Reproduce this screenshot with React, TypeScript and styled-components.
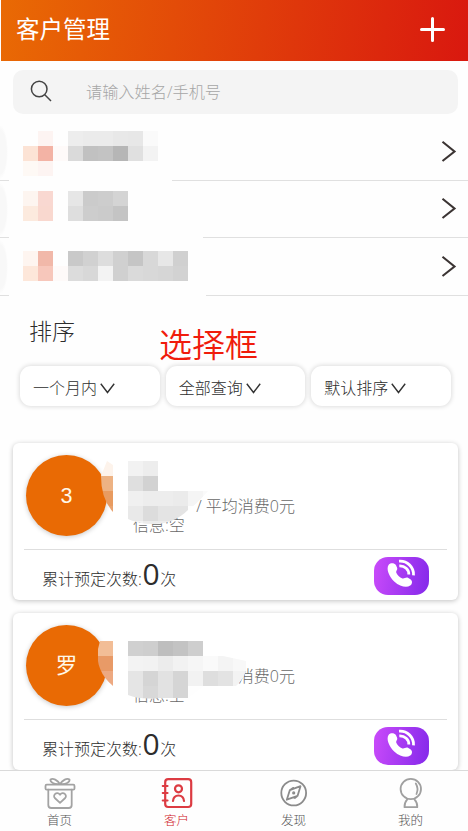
import React from 'react';
import styled, { createGlobalStyle } from 'styled-components';

const GlobalStyle = createGlobalStyle`
  * { box-sizing: border-box; }
  body { margin: 0; background: #fff; }
  h1, h2, p { margin: 0; font-weight: inherit; }
  button { font: inherit; color: inherit; border: 0; padding: 0; background: none; }
`;

const Screen = styled.div`
  width: 468px;
  height: 831px;
  display: flex;
  flex-direction: column;
  overflow: hidden;
  background: #fefefe;
  color: #2d2d2d;
  font-family: 'Open Sans', 'Noto Sans CJK SC', sans-serif;
  font-weight: 300;
  font-size: 16px;
`;

const Header = styled.header`
  flex: none;
  height: 61px;
  margin-left: 1px;
  padding: 0 22px 3px 15px;
  display: flex;
  align-items: center;
  justify-content: space-between;
  color: #fff;
  background: linear-gradient(98deg, #e96a04 0%, #d9180f 100%);
`;

const Title = styled.h1`
  font-size: 23.5px;
  line-height: 34px;
  font-weight: 400;
`;

const Content = styled.main`
  flex: 1;
  min-height: 0;
  overflow: hidden;
  display: flex;
  flex-direction: column;
`;

const SearchBar = styled.div`
  flex: none;
  height: 44px;
  margin: 9px 10px 9px 13px;
  padding: 0 0 2px 17px;
  display: flex;
  align-items: center;
  gap: 34px;
  border-radius: 10px;
  background: #f4f4f4;
  color: #a6a6a6;
  font-size: 16.2px;
`;

const Row = styled.div<{ $height: number; $top: number; $gapEnd: number }>`
  flex: none;
  height: ${(p) => p.$height}px;
  padding: ${(p) => p.$top}px 10px 0 23px;
  display: flex;
  justify-content: space-between;
  background:
    linear-gradient(90deg, #e0e0e0 9px, transparent 9px ${(p) => p.$gapEnd}px, #e0e0e0 ${(p) => p.$gapEnd}px) left bottom / 100% 1px no-repeat,
    radial-gradient(ellipse 8px 27px at 0 50%, #f8f8f8 80%, transparent 100%) left / 10px 100% no-repeat;
`;

const RowArrow = styled.span<{ $offset: number }>`
  margin-top: ${(p) => p.$offset}px;
  height: 22px;
  display: flex;
`;

const Pixels = styled.div<{ $cols: number }>`
  display: grid;
  grid-template-columns: repeat(${(p) => p.$cols}, 15px);
  grid-auto-rows: 15px;
  align-content: start;
`;

const Pixel = styled.i<{ $tone: string }>`
  background: ${(p) => p.$tone};
`;

const SortHead = styled.div`
  flex: none;
  height: 70px;
  padding: 17px 0 0 29px;
  display: flex;
  align-items: flex-start;
  gap: 84px;
`;

const SortTitle = styled.h2`
  font-size: 23px;
  line-height: 36px;
`;

const Note = styled.p`
  margin-top: 9px;
  font-size: 33px;
  line-height: 46px;
  font-weight: 350;
  color: #f01c0c;
`;

const Filters = styled.div`
  flex: none;
  display: flex;
  gap: 6px;
  padding: 0 17px 0 20px;
`;

const FilterButton = styled.button`
  flex: 1;
  height: 40px;
  padding: 4px 0 0 13px;
  display: flex;
  align-items: center;
  gap: 3px;
  border-radius: 11px;
  background: #fff;
  box-shadow: 0 0 4px 1px rgba(0, 0, 0, 0.13);
  line-height: 24px;
`;

const Cards = styled.section`
  flex: none;
  display: flex;
  flex-direction: column;
  gap: 13px;
  padding: 37px 10px 0 13px;
`;

const Card = styled.article`
  position: relative;
  height: 157px;
  padding: 0 11px;
  border-radius: 6px;
  background: #fff;
  box-shadow: 0 1px 5px rgba(0, 0, 0, 0.24);
`;

const CardTop = styled.div`
  height: 107px;
  padding: 12px 0 0 2px;
  display: flex;
  border-bottom: 1px solid #dedede;
`;

const Avatar = styled.div`
  width: 81px;
  height: 81px;
  padding-top: 1px;
  border-radius: 50%;
  display: flex;
  align-items: center;
  justify-content: center;
  background: #e96a04;
  box-shadow: 0 1px 5px rgba(0, 0, 0, 0.22);
  color: #fff8e8;
  font-family: 'Liberation Sans', 'Noto Sans CJK SC', sans-serif;
  font-size: 21.5px;
  font-weight: 400;
  line-height: 30px;
`;

const Details = styled.div`
  padding: 42px 0 0 26px;
  color: #686868;
  line-height: 19px;
`;

const Spend = styled.p`
  padding-left: 59px;
  white-space: pre;
`;

const CardBottom = styled.div`
  height: 50px;
  padding: 0 18px;
  display: flex;
  align-items: center;
  justify-content: space-between;
`;

const Count = styled.p`
  display: flex;
  align-items: baseline;
  line-height: 40px;
  margin-top: 2px;
`;

const CountNumber = styled.span`
  width: 18.5px;
  text-align: center;
  font-size: 30px;
  font-weight: 400;
`;

const CallButton = styled.button`
  width: 55px;
  height: 38px;
  margin-top: 1px;
  display: flex;
  justify-content: center;
  padding: 2px 2px 0 0;
  border-radius: 14px;
  background: linear-gradient(100deg, #ca4bfa, #8429ea);
`;

const CardMask = styled.div<{ $x: number; $y: number; $clip: string }>`
  position: absolute;
  left: ${(p) => p.$x}px;
  top: ${(p) => p.$y}px;
  clip-path: ${(p) => p.$clip};
`;

const TabBar = styled.nav`
  flex: none;
  height: 61px;
  display: grid;
  grid-template-columns: repeat(4, 117px);
  padding-left: 1px;
  border-top: 1px solid #dadada;
  background: #fefefe;
`;

const Tab = styled.button<{ $active?: boolean }>`
  display: flex;
  flex-direction: column;
  align-items: center;
  padding-top: 6px;
  font-size: 12.5px;
  line-height: 18px;
  color: ${(p) => (p.$active ? '#d0141c' : '#555')};
`;

const TabGlyph = styled.svg`
  width: 32px;
  height: 32px;
  margin-bottom: 3px;
  fill: none;
  stroke-width: 1.8;
  stroke-linejoin: round;
  stroke-linecap: round;
`;

function Mosaic({ rows }: { rows: string[] }) {
  const cells = rows.map((r) => r.split(' '));
  return (
    <Pixels $cols={cells[0].length}>
      {cells.flatMap((row, y) =>
        row.map((c, x) => <Pixel key={`${y}-${x}`} $tone={c === '-' ? 'transparent' : `#${c}`} />),
      )}
    </Pixels>
  );
}

const people = [
  {
    height: 58, top: 8, arrow: 9, gapEnd: 172,
    rows: [
      'fefefe fdf4f2 fefefe ededed ebebeb ebebeb e8e8e8 e7e7e7 fafafa',
      'fce3d5 f3b3a5 fefaf9 dadada c1c1c1 c3c3c3 b6b6b6 e0e0e0 f3f3f3',
      'fef9f5 fdf4f2 - - - - - - -',
    ],
  },
  {
    height: 57, top: 10, arrow: 6, gapEnd: 203,
    rows: [
      'fdf5f0 f9d8d1 - e6e6e6 cbcbcb cdcdcd d4d4d4',
      'fceade f9d8cf - dedede cdcdcd cbcbcb c4c4c4',
    ],
  },
  {
    height: 58, top: 13, arrow: 4, gapEnd: 206,
    rows: [
      'fef5f0 f1b8a9 - c9c9c9 d1d1d1 dddddd d0d0d0 c5c5c5 d8d8d8 e7e7e7 d0d0d0',
      'fde7da f7c7bb fefaf9 dcdcdc d8d8d8 f3f3f3 d0d0d0 dadada d8d8d8 d6d6d6 d2d2d2',
    ],
  },
];

const customers = [
  {
    initial: '3',
    avatar: { x: 85, y: 18, clip: "path('M9 0L15 4V51Q3 38 3 15Z')", rows: ['fdf3eb', 'edb283', 'e89b60', 'e9a36f'] },
    text: {
      x: 115, y: 18, clip: "path('M0 0H30V30H80Q68 44 60 49Q46 63 25 63Q10 63 0 58Z')",
      rows: ['f2f2f2 ededed - - - -', 'dfdfdf d2d2d2 - - - -', 'f0f0f0 ededed ededed ebebeb f5f5f5 fafafa', 'e9e9e9 dcdcdc e4e4e4 e4e4e4 fefefe fefefe', 'f3f3f3 ececec ececec f2f2f2 fefefe -'],
    },
  },
  {
    initial: '罗',
    avatar: { x: 85, y: 28, clip: "path('M2 0H15V45Q-3 30 0 8Z')", rows: ['f2bd96', 'e89a67', 'eda981'] },
    text: {
      x: 115, y: 28, clip: "path('M0 0H75V15H95L118 20V30Q114 40 108 45H76L60 57H32Q12 59 0 54Z')",
      rows: ['d0d0d0 cecece bebebe c3c3c3 cecece fefefe fefefe fefefe', 'f3f3f3 f2f2f2 ececec f2f2f2 f6f6f6 fafafa f4f4f4 f8f8f8', 'e5e5e5 d5d5d5 e2e2e2 d5d5d5 f2f2f2 dedede e3e3e3 f3f3f3', 'e5e5e5 d8d8d8 e2e2e2 d5d5d5 fefefe fefefe fefefe -'],
    },
  },
];

const PhoneIcon = () => (
  <svg width="30" height="30" viewBox="0 0 30 30" fill="none">
    <path d="M2.4 6.2C4 3.6 8.3 3.8 10 6.2L11.2 9C11.8 10.8 9.8 12 10.2 13.4C11 15.8 13.6 18.6 16.5 19.4C18.2 19.8 19.4 18.3 21.5 18.6L24.4 20.2C26.7 22 26.5 24.8 24.2 26.6C20.6 29 14.2 27.8 8.2 22.4C2.8 17.2 .2 10 2.4 6.2Z" fill="#fff" />
    <path d="M13 2.2C21 1.5 28 8 27.5 16.3M13.3 6.8C18.8 6.6 23 10.5 22.8 15.5" stroke="#fff" strokeWidth="2.8" />
  </svg>
);

export default function App() {
  return (
    <>
      <GlobalStyle />
      <Screen>
        <Header>
          <Title>客户管理</Title>
          <svg width="26" height="26" viewBox="0 0 26 26">
            <path d="M12.5 2.5V24.5M1.5 13.5H23.5" stroke="#fff" strokeWidth="3" strokeLinecap="round" />
          </svg>
        </Header>
        <Content>
          <SearchBar>
            <svg width="22" height="22" viewBox="0 0 22 22" fill="none" stroke="#444" strokeWidth="1.5">
              <circle cx="9.2" cy="9" r="7.8" />
              <path d="M14.8 14.7L21 21" />
            </svg>
            <span>请输入姓名/手机号</span>
          </SearchBar>
          {people.map((p, i) => (
            <Row key={i} $height={p.height} $top={p.top} $gapEnd={p.gapEnd}>
              <Mosaic rows={p.rows} />
              <RowArrow $offset={p.arrow}>
                <svg width="18" height="22" viewBox="0 0 18 22" fill="none" stroke="#3b3433" strokeWidth="2.1">
                  <path d="M2.5 1.8L14.5 11.5L2.5 21" />
                </svg>
              </RowArrow>
            </Row>
          ))}
          <SortHead>
            <SortTitle>排序</SortTitle>
            <Note>选择框</Note>
          </SortHead>
          <Filters>
            {['一个月内', '全部查询', '默认排序'].map((label) => (
              <FilterButton key={label}>
                {label}
                <svg width="15" height="11" viewBox="0 0 15 11" fill="none" stroke="#333" strokeWidth="1.4">
                  <path d="M.8.8L7.5 9.5L14.2.8" />
                </svg>
              </FilterButton>
            ))}
          </Filters>
          <Cards>
            {customers.map((c) => (
              <Card key={c.initial}>
                <CardTop>
                  <Avatar>{c.initial}</Avatar>
                  <Details>
                    <Spend> / 平均消费0元</Spend>
                    <p>信息:空</p>
                  </Details>
                </CardTop>
                <CardBottom>
                  <Count>
                    累计预定次数:<CountNumber>0</CountNumber>次
                  </Count>
                  <CallButton aria-label="拨打电话">
                    <PhoneIcon />
                  </CallButton>
                </CardBottom>
                {[c.avatar, c.text].map((m) => (
                  <CardMask key={m.x} $x={m.x} $y={m.y} $clip={m.clip}>
                    <Mosaic rows={m.rows} />
                  </CardMask>
                ))}
              </Card>
            ))}
          </Cards>
        </Content>
        <TabBar>
          <Tab>
            <TabGlyph viewBox="0 0 32 32" stroke="#a3a3a3">
              <rect x="1.5" y="7.7" width="29" height="5" rx="1.2" />
              <path d="M4.3 12.7V28Q4.3 31 7.3 31H24.7Q27.7 31 27.7 28V12.7M16 7C10 8 6 5 6.5 2.5C9 .8 13.5 3 16 7C18.5 3 23 .8 25.5 2.5C26 5 22 8 16 7ZM16 25.8L10.8 21C8.4 18.5 12.5 13.6 16 17.7C19.5 13.6 23.6 18.5 21.2 21Z" />
            </TabGlyph>
            首页
          </Tab>
          <Tab $active>
            <TabGlyph viewBox="0 0 32 32" stroke="#dc3b42">
              <rect x="4.2" y="2.2" width="26" height="27.8" rx="3" strokeWidth="2.2" />
              <circle cx="17.5" cy="11.8" r="3.5" strokeWidth="2.2" />
              <path d="M12 24Q12.5 18.5 17.5 18.5Q22.5 18.5 23 24M1.8 9H6.5M1.8 16H6.5M1.8 23.5H6.5" strokeWidth="2.2" />
            </TabGlyph>
            客户
          </Tab>
          <Tab>
            <TabGlyph viewBox="0 0 32 32" stroke="#8b8b8b">
              <circle cx="15.7" cy="16" r="12.4" />
              <path d="M22.5 9.2L19.6 18.8L8.8 22.7L11.8 13.2ZM19.6 18.8L16.8 21M11.8 13.2L15 10.9" />
              <circle cx="15.7" cy="15.9" r=".7" />
            </TabGlyph>
            发现
          </Tab>
          <Tab>
            <TabGlyph viewBox="0 0 32 32" stroke="#a0a0a0">
              <circle cx="15.8" cy="12" r="10.2" />
              <path d="M20.8 6.5Q23.8 11.5 21.5 17M12.3 22.3Q9.3 25.5 9.5 30.2H22.3Q22.5 25.5 19.4 22.3" />
            </TabGlyph>
            我的
          </Tab>
        </TabBar>
      </Screen>
    </>
  );
}
